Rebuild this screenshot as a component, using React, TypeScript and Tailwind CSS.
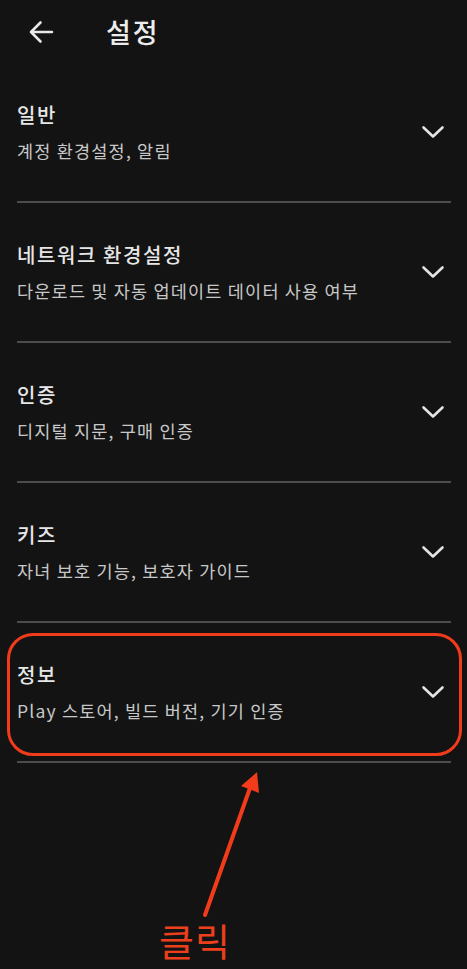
import React from 'react';

const sections = [
  { title: '일반', desc: '계정 환경설정, 알림' },
  { title: '네트워크 환경설정', desc: '다운로드 및 자동 업데이트 데이터 사용 여부' },
  { title: '인증', desc: '디지털 지문, 구매 인증' },
  { title: '키즈', desc: '자녀 보호 기능, 보호자 가이드' },
  { title: '정보', desc: 'Play 스토어, 빌드 버전, 기기 인증' },
];

const Chevron = () => (
  <svg width="24" height="14" viewBox="0 0 24 14" fill="none">
    <path d="M2.5 2.5 L12 11.5 L21.5 2.5" stroke="#e4e4e4" strokeWidth="2.6" strokeLinecap="round" strokeLinejoin="round" />
  </svg>
);

const BackArrow = () => (
  <svg width="26" height="26" viewBox="0 0 26 26" fill="none">
    <path d="M24 13H3M12.5 3.5 3 13l9.5 9.5" stroke="#e8e8e8" strokeWidth="2.6" strokeLinecap="round" strokeLinejoin="round" />
  </svg>
);

const App: React.FC = () => {
  return (
    <div
      className="relative w-full min-h-screen bg-[#131313] overflow-hidden"
      style={{ fontFamily: '"Noto Sans CJK KR", "Noto Sans", sans-serif' }}
    >
      {/* Header */}
      <header className="h-[63px] flex items-center pl-[28px]">
        <BackArrow />
        <h1 className="ml-[52px] text-[27px] leading-[36px] font-medium tracking-[2px] text-[#ececec]">설정</h1>
      </header>

      {/* Settings list */}
      <div className="ml-[17px] w-[434px]">
        {sections.map((s) => (
          <div key={s.title} className="h-[140px] flex items-center justify-between border-b-2 border-[#4c4c4c] pr-[6px]">
            <div className="flex flex-col">
              <span className="text-[20px] leading-[28px] font-medium tracking-[1.6px] text-[#e6e6e6]">{s.title}</span>
              <span className="mt-[10px] text-[17.5px] leading-[24px] tracking-[1.2px] text-[#c8c8c8]">{s.desc}</span>
            </div>
            <Chevron />
          </div>
        ))}
      </div>

      {/* Annotation: highlight box */}
      <div className="absolute left-[7px] top-[633px] w-[455px] h-[123px] border-[3px] border-[#f23b1b] rounded-[26px] pointer-events-none" />

      {/* Annotation: arrow */}
      <svg className="absolute left-0 top-0 pointer-events-none" width="467" height="969" viewBox="0 0 467 969" fill="none">
        <line x1="205" y1="915" x2="250" y2="788" stroke="#f23b1b" strokeWidth="4" strokeLinecap="round" />
        <polygon points="257,772 241,786 259,793" fill="#f23b1b" />
      </svg>

      {/* Annotation: label */}
      <span className="absolute left-[159px] top-[915px] text-[38px] leading-[50px] tracking-[1px] text-[#ec3f1c]">클릭</span>
    </div>
  );
};

export default App;
